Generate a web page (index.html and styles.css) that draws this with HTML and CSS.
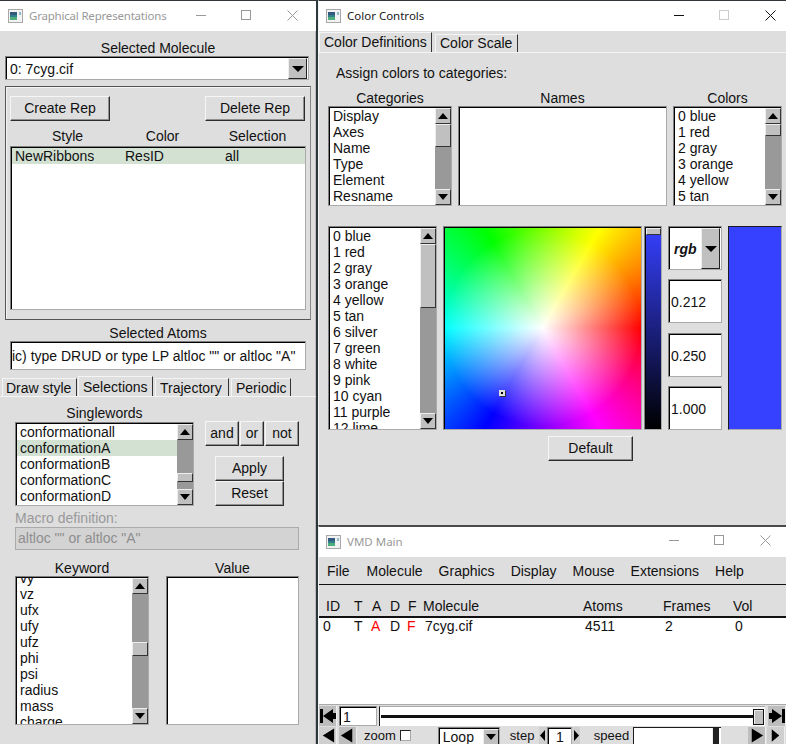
FILE: index.html
```html
<!DOCTYPE html>
<html lang="en">
<head>
  <meta charset="UTF-8">
  <title>VMD</title>
  <link rel="stylesheet" href="styles.css">
</head>
<body>
  <svg class="defs" width="0" height="0">
    <symbol id="appicon" viewBox="0 0 15 14">
      <rect x="0.5" y="0.5" width="14" height="13" fill="#f2f2f2" stroke="#a8a8a8"/>
      <rect x="2" y="3" width="7" height="8" fill="#2f7f8c"/>
      <rect x="2" y="3" width="7" height="3" fill="#33597f"/>
      <rect x="2" y="8" width="7" height="3" fill="#4fae7c"/>
      <rect x="11" y="3" width="2" height="3" fill="#8fb8c8"/>
    </symbol>
  </svg>

  <div class="desktop">
    <!-- Graphical Representations -->
    <div class="window reps">
      <div class="titlebar inactive">
        <svg class="appicon"><use href="#appicon"/></svg>
        <span class="wintitle">Graphical Representations</span>
        <span class="wc wc-min"></span>
        <span class="wc wc-max"></span>
        <svg class="wc-close" viewBox="0 0 11 11"><path d="M0.5 0.5L10.5 10.5M10.5 0.5L0.5 10.5"/></svg>
      </div>
      <div class="reps-body">
        <div class="caption mol-caption">Selected Molecule</div>
        <div class="choice mol-choice">
          <span class="choice-text">0: 7cyg.cif</span>
          <span class="choice-btn"></span>
        </div>
        <div class="repbox">
          <div class="rep-buttons">
            <button class="btn btn-rep">Create Rep</button>
            <button class="btn btn-rep">Delete Rep</button>
          </div>
          <div class="rep-head">
            <span>Style</span><span>Color</span><span>Selection</span>
          </div>
          <div class="list rep-list">
            <div class="rep-row"><span>NewRibbons</span><span>ResID</span><span>all</span></div>
          </div>
        </div>
        <div class="caption atoms-caption">Selected Atoms</div>
        <div class="field atoms-field">ic) type DRUD or type LP altloc "" or altloc "A"</div>
        <div class="tabs reps-tabs">
          <span class="tab tab-draw">Draw style</span>
          <span class="tab tab-on tab-sel">Selections</span>
          <span class="tab tab-traj">Trajectory</span>
          <span class="tab tab-per">Periodic</span>
        </div>
        <div class="sel-panel">
          <div class="sel-top">
            <div>
              <div class="caption words-caption">Singlewords</div>
              <div class="list words-list">
                <div class="items">
                  <div>conformationall</div>
                  <div class="picked">conformationA</div>
                  <div>conformationB</div>
                  <div>conformationC</div>
                  <div>conformationD</div>
                </div>
                <div class="scrollbar">
                  <span class="arrow up"></span>
                  <div class="trough"><span class="thumb thumb-words"></span></div>
                  <span class="arrow down"></span>
                </div>
              </div>
            </div>
            <div class="sel-actions">
              <div class="logic">
                <button class="btn btn-and">and</button>
                <button class="btn btn-or">or</button>
                <button class="btn btn-and">not</button>
              </div>
              <div class="apply">
                <button class="btn btn-apply">Apply</button>
                <button class="btn btn-apply">Reset</button>
              </div>
            </div>
          </div>
          <div class="macro-label">Macro definition:</div>
          <div class="macro-field">altloc "" or altloc "A"</div>
          <div class="sel-bottom">
            <div>
              <div class="caption">Keyword</div>
              <div class="list key-list">
                <div class="items items-up">
                  <div>vy</div>
                  <div>vz</div>
                  <div>ufx</div>
                  <div>ufy</div>
                  <div>ufz</div>
                  <div>phi</div>
                  <div>psi</div>
                  <div>radius</div>
                  <div>mass</div>
                  <div>charge</div>
                </div>
                <div class="scrollbar">
                  <span class="arrow up"></span>
                  <div class="trough"><span class="thumb thumb-keys"></span></div>
                  <span class="arrow down"></span>
                </div>
              </div>
            </div>
            <div>
              <div class="caption">Value</div>
              <div class="list value-list"></div>
            </div>
          </div>
        </div>
      </div>
    </div>

    <div class="right-col">
      <!-- Color Controls -->
      <div class="window colors">
        <div class="titlebar">
          <svg class="appicon"><use href="#appicon"/></svg>
          <span class="wintitle">Color Controls</span>
          <span class="wc wc-min"></span>
          <span class="wc wc-max wc-off"></span>
          <svg class="wc-close" viewBox="0 0 11 11"><path d="M0.5 0.5L10.5 10.5M10.5 0.5L0.5 10.5"/></svg>
        </div>
        <div class="tabs color-tabs">
          <span class="tab tab-on tab-defs">Color Definitions</span>
          <span class="tab tab-scale">Color Scale</span>
        </div>
        <div class="color-panel">
          <div class="assign">Assign colors to categories:</div>
          <div class="color-lists">
            <div>
              <div class="caption">Categories</div>
              <div class="list cat-list">
                <div class="items">
                  <div>Display</div>
                  <div>Axes</div>
                  <div>Name</div>
                  <div>Type</div>
                  <div>Element</div>
                  <div>Resname</div>
                </div>
                <div class="scrollbar">
                  <span class="arrow up"></span>
                  <div class="trough"><span class="thumb thumb-cats"></span></div>
                  <span class="arrow down"></span>
                </div>
              </div>
            </div>
            <div>
              <div class="caption">Names</div>
              <div class="list names-list"></div>
            </div>
            <div>
              <div class="caption">Colors</div>
              <div class="list colors-list">
                <div class="items">
                  <div>0 blue</div>
                  <div>1 red</div>
                  <div>2 gray</div>
                  <div>3 orange</div>
                  <div>4 yellow</div>
                  <div>5 tan</div>
                </div>
                <div class="scrollbar">
                  <span class="arrow up"></span>
                  <div class="trough"><span class="thumb thumb-colors"></span></div>
                  <span class="arrow down"></span>
                </div>
              </div>
            </div>
          </div>
          <div class="editor">
            <div class="list editor-list">
              <div class="items">
                <div>0 blue</div>
                <div>1 red</div>
                <div>2 gray</div>
                <div>3 orange</div>
                <div>4 yellow</div>
                <div>5 tan</div>
                <div>6 silver</div>
                <div>7 green</div>
                <div>8 white</div>
                <div>9 pink</div>
                <div>10 cyan</div>
                <div>11 purple</div>
                <div>12 lime</div>
              </div>
              <div class="scrollbar">
                <span class="arrow up"></span>
                <div class="trough"><span class="thumb thumb-edit"></span></div>
                <span class="arrow down"></span>
              </div>
            </div>
            <div class="picker"><span class="picker-dot"></span></div>
            <div class="value-slider"><span class="value-thumb"></span></div>
            <div class="rgb-col">
              <div class="choice rgb-choice">
                <span class="choice-text rgb-text">rgb</span>
                <span class="choice-btn rgb-btn"></span>
              </div>
              <div class="field rgb-val">0.212</div>
              <div class="field rgb-val rgb-mid">0.250</div>
              <div class="field rgb-val">1.000</div>
            </div>
            <div class="swatch"></div>
          </div>
          <button class="btn btn-default">Default</button>
        </div>
      </div>

      <!-- VMD Main -->
      <div class="window main">
        <div class="titlebar inactive">
          <svg class="appicon"><use href="#appicon"/></svg>
          <span class="wintitle">VMD Main</span>
          <span class="wc wc-min"></span>
          <span class="wc wc-max"></span>
          <svg class="wc-close" viewBox="0 0 11 11"><path d="M0.5 0.5L10.5 10.5M10.5 0.5L0.5 10.5"/></svg>
        </div>
        <div class="menubar">
          <span>File</span><span>Molecule</span><span>Graphics</span><span>Display</span><span>Mouse</span><span>Extensions</span><span>Help</span>
        </div>
        <div class="mol-head">
          <span>ID</span><span>T</span><span>A</span><span>D</span><span>F</span><span>Molecule</span><span>Atoms</span><span>Frames</span><span>Vol</span>
        </div>
        <div class="mol-list">
          <div class="mol-row">
            <span>0</span><span>T</span><span class="off">A</span><span>D</span><span class="off">F</span><span>7cyg.cif</span><span>4511</span><span>2</span><span>0</span>
          </div>
        </div>
        <div class="anim-row">
          <span class="anim-btn">
            <svg viewBox="0 0 18 18"><path d="M1 2h3v14H1zM4 9l10-7v4h3v6h-3v4z"/></svg>
          </span>
          <div class="field frame-field">1</div>
          <div class="frame-slider"><span class="frame-line"></span><span class="frame-thumb"></span></div>
          <span class="anim-btn anim-end">
            <svg viewBox="0 0 18 18"><path d="M17 2h-3v14h3zM14 9L4 2v4H1v6h3v4z"/></svg>
          </span>
        </div>
        <div class="play-row">
          <span class="play-btn"><svg viewBox="0 0 18 17"><path d="M16 1v15L4 8.500z"/></svg></span>
          <span class="play-btn play-solid"><svg viewBox="0 0 18 17"><path d="M14 1v15L2 8.500z"/></svg></span>
          <span class="zoom-label">zoom</span>
          <span class="checkbox"></span>
          <div class="choice loop-choice">
            <span class="choice-text">Loop</span>
            <span class="choice-btn loop-btn"></span>
          </div>
          <span class="step-label">step</span>
          <span class="nudge"><svg viewBox="0 0 8 17"><path d="M6 3v11L1 8.500z"/></svg></span>
          <div class="field step-field">1</div>
          <span class="nudge"><svg viewBox="0 0 8 17"><path d="M2 3v11l5-5.500z"/></svg></span>
          <span class="speed-label">speed</span>
          <div class="speed-slider"><span class="speed-thumb"></span></div>
          <span class="play-btn play-solid play-fwd"><svg viewBox="0 0 18 17"><path d="M4 1v15l12-7.500z"/></svg></span>
          <span class="play-btn play-last"><svg viewBox="0 0 18 17"><path d="M5 2v13l8-6.500z"/></svg></span>
        </div>
      </div>
    </div>
  </div>
</body>
</html>
```

FILE: styles.css
```css
* {
  box-sizing: border-box;
}

html, body {
  margin: 0;
  padding: 0;
  height: 744px;
  overflow: hidden;
}

body {
  font-family: "Liberation Sans", Arial, sans-serif;
  font-size: 14px;
  line-height: 16px;
  color: #111;
  background: #dedede;
}

.defs {
  position: absolute;
}

.desktop {
  display: flex;
  width: 786px;
  height: 744px;
}

.right-col {
  width: 468px;
  display: flex;
  flex-direction: column;
}

.window {
  background: #dedede;
  border-top: 1px solid #30363a;
  overflow: hidden;
}

/* title bars */
.titlebar {
  display: flex;
  align-items: center;
  height: 30px;
  background: #fff;
  padding-left: 7px;
  position: relative;
}

.reps .titlebar {
  padding-left: 8px;
}

.appicon {
  width: 15px;
  height: 14px;
  margin-right: 6px;
}

.wintitle {
  font-family: "Noto Sans", sans-serif;
  font-size: 11.500px;
  color: #1a1a1a;
}

.reps .wintitle {
  letter-spacing: -0.2px;
}

.inactive .wintitle {
  color: #999;
}

.wc {
  position: absolute;
}

.wc-min {
  width: 10px;
  height: 1px;
  top: 14px;
  background: #111;
}

.wc-max {
  width: 10px;
  height: 10px;
  top: 9px;
  border: 1px solid #111;
}

.wc-off {
  border-color: #ccc;
}

.wc-close {
  position: absolute;
  width: 11px;
  height: 11px;
  top: 9px;
  fill: none;
  stroke: #111;
}

.inactive .wc-min {
  background: #999;
}

.inactive .wc-max {
  border-color: #999;
}

.inactive .wc-close {
  stroke: #999;
}

.reps .wc-min { left: 196px; }
.reps .wc-max { left: 241px; }
.reps .wc-close { left: 287px; }
.colors .wc-min { left: 355px; }
.colors .wc-max { left: 400px; }
.colors .wc-close { left: 446px; }
.main .wc-min { left: 350px; top: 13px; }
.main .wc-max { left: 395px; top: 8px; }
.main .wc-close { left: 441px; top: 8px; }

/* shared widgets */
.caption {
  text-align: center;
}

.btn {
  display: block;
  font: inherit;
  color: inherit;
  background: #dedede;
  padding: 0 0 2px;
  border: 1px solid;
  border-color: #f6f6f6 #2c2c2c #2c2c2c #f6f6f6;
  box-shadow: inset -1px -1px 0 #909090;
}

/* sunken edge: gray then black on top and left, light on bottom and right */
.list,
.field,
.choice,
.picker,
.value-slider {
  background: #fff;
  border: 1px solid;
  border-color: #808080 #aaa #aaa #808080;
  padding: 1px 0 0 1px;
  box-shadow: inset 1px 1px 0 #000;
}

.list {
  display: flex;
  overflow: hidden;
}

.items {
  flex: 1;
  min-width: 0;
}

.items div {
  height: 16px;
  padding-left: 3px;
  white-space: nowrap;
}

.items .picked {
  background: #d3e1d3;
}

.scrollbar {
  width: 16px;
  flex: none;
  display: flex;
  flex-direction: column;
  background: #999;
}

.arrow {
  display: flex;
  align-items: center;
  justify-content: center;
  flex: none;
  height: 16px;
  background: #c0c0c0;
  border: 1px solid;
  border-color: #eee #333 #333 #eee;
}

.arrow::after {
  content: "";
  border-left: 5px solid transparent;
  border-right: 5px solid transparent;
}

.arrow.up::after {
  border-bottom: 6px solid #000;
}

.arrow.down::after {
  border-top: 6px solid #000;
}

.trough {
  flex: 1;
  min-height: 0;
  overflow: hidden;
}

.thumb {
  display: block;
  background: #c0c0c0;
  border: 1px solid;
  border-color: #eee #333 #333 #eee;
}

.choice {
  display: flex;
  align-items: center;
  justify-content: space-between;
}

.choice-text {
  padding-left: 3px;
}

.choice-btn {
  display: flex;
  align-items: center;
  justify-content: center;
  width: 19px;
  height: 100%;
  background: #c0c0c0;
  border: 1px solid;
  border-color: #eee #222 #222 #eee;
}

.choice-btn::after {
  content: "";
  border-left: 6px solid transparent;
  border-right: 6px solid transparent;
  border-top: 6px solid #000;
}

.field {
  display: flex;
  align-items: center;
  white-space: nowrap;
  overflow: hidden;
}

.tabs {
  display: flex;
  align-items: flex-end;
}

.tab {
  height: 18px;
  line-height: 17px;
  padding-left: 4px;
  border-right: 1px solid #333;
  border-left: 1px solid #f4f4f4;
  border-top: 1px solid #f4f4f4;
}

.tab-on {
  height: 20px;
  line-height: 18px;
}

/* Graphical Representations window */
.reps {
  width: 318px;
  height: 744px;
  flex: none;
  border-right: 2px solid #2d363b;
  box-shadow: inset -1px 0 0 #bbb;
}

.reps-body {
  padding-top: 9px;
}

.mol-caption {
  width: 316px;
}

.mol-choice {
  width: 304px;
  height: 24px;
  margin-left: 5px;
  padding-right: 1px;
}

.repbox {
  width: 306px;
  height: 234px;
  margin: 6px 0 0 5px;
  padding: 9px 4px 0;
  border: 1px solid;
  border-color: #555 #888 #555 #555;
  box-shadow: inset 1px 1px 0 #f4f4f4;
}

.rep-buttons {
  display: flex;
  justify-content: space-between;
  padding-right: 1px;
}

.btn-rep {
  width: 100px;
  height: 25px;
}

.rep-head {
  display: grid;
  grid-template-columns: 95px 95px 95px;
  text-align: center;
  margin-top: 7px;
  height: 16px;
  padding-left: 10px;
}

.rep-list {
  display: block;
  width: 296px;
  height: 164px;
  margin-top: 2px;
}

.rep-row {
  display: grid;
  grid-template-columns: 110px 100px 1fr;
  height: 16px;
  padding-left: 3px;
  background: #d3e1d3;
}

.atoms-caption {
  width: 316px;
  margin-top: 5px;
}

.atoms-field {
  width: 296px;
  height: 29px;
  margin-left: 10px;
}

.reps-tabs {
  height: 20px;
  margin-top: 6px;
  padding-left: 2px;
}

.reps-tabs .tab {
  line-height: 19px;
}

.reps-tabs .tab-on {
  line-height: 20px;
}

.reps-tabs .tab-draw {
  padding-left: 3px;
}

.tab-draw { width: 75px; }
.tab-sel { width: 75px; margin-left: 1px; }
.tab-traj { width: 74px; margin-left: 2px; }
.tab-per { width: 60px; margin-left: 2px; }

.sel-panel {
  border-top: 1px solid #f4f4f4;
  padding: 9px 0 0 15px;
}

.sel-top {
  display: flex;
}

.words-caption {
  margin: -1px 0 1px;
}

.words-list {
  width: 179px;
  height: 84px;
}

.thumb-words {
  height: 9px;
  margin-top: 33px;
}

.sel-actions {
  margin: 15px 0 0 11px;
}

.logic {
  display: flex;
  gap: 1px;
}

.btn-and {
  width: 34px;
  height: 25px;
}

.btn-or {
  width: 24px;
  height: 25px;
}

.apply {
  margin: 10px 0 0 10px;
}

.btn-apply {
  width: 69px;
  height: 25px;
}

.macro-label {
  color: #999;
  margin-top: 4px;
}

.macro-field {
  width: 284px;
  height: 23px;
  line-height: 21px;
  margin-top: 1px;
  padding-left: 2px;
  color: #8e8e8e;
  background: #d3d3d3;
  border: 1px solid #aaa;
}

.sel-bottom {
  display: flex;
  gap: 17px;
  margin-top: 10px;
}

.key-list {
  width: 134px;
  height: 149px;
}

.items-up {
  margin-top: -8px;
  height: 160px;
}

.thumb-keys {
  height: 14px;
  margin-top: 48px;
}

.value-list {
  width: 133px;
  height: 149px;
}

/* Color Controls window */
.colors {
  height: 525px;
  flex: none;
  border-left: 1px solid #f4f4f4;
}

.color-tabs {
  height: 21px;
}

.tab-defs { width: 113px; }
.tab-scale { width: 83px; margin-left: 3px; }

.color-panel {
  border-top: 1px solid #f4f4f4;
  height: 474px;
  padding: 12px 0 0 9px;
}

.assign {
  padding-left: 8px;
  margin-bottom: 9px;
}

.color-lists {
  display: flex;
  gap: 6px;
}

.cat-list {
  width: 124px;
  height: 100px;
}

.names-list {
  width: 209px;
  height: 100px;
}

.colors-list {
  width: 109px;
  height: 100px;
}

.thumb-cats {
  height: 23px;
}

.thumb-colors {
  height: 12px;
}

.editor {
  display: flex;
  margin-top: 20px;
  height: 204px;
}

.editor-list {
  width: 109px;
  height: 204px;
}

.thumb-edit {
  height: 64px;
}

.picker {
  position: relative;
  width: 199px;
  height: 204px;
  margin-left: 6px;
  background:
    radial-gradient(circle closest-side, #fff, rgba(255, 255, 255, 0)),
    conic-gradient(from 90deg, #f00, #f0f, #00f, #0ff, #0f0, #ff0, #f00);
}

.picker-dot {
  position: absolute;
  left: 55px;
  top: 163px;
  width: 6px;
  height: 6px;
  background: #000;
  border: 2px solid #ddd;
  box-shadow: 1px 1px 0 #333;
}

.value-slider {
  width: 18px;
  height: 204px;
  margin-left: 2px;
  background: linear-gradient(#3640ff, #000);
}

.value-thumb {
  display: block;
  height: 7px;
  background: #c0c0c0;
  border: 1px solid;
  border-color: #eee #333 #333 #eee;
}

.rgb-col {
  display: flex;
  flex-direction: column;
  width: 54px;
  margin-left: 6px;
}

.rgb-choice {
  height: 44px;
  padding-right: 1px;
}

.rgb-text {
  font-weight: bold;
  font-style: italic;
  padding-left: 4px;
}

.rgb-val {
  height: 44px;
  margin-top: 9px;
  padding-left: 2px;
}

.rgb-mid {
  margin-top: 10px;
}

.swatch {
  width: 54px;
  height: 204px;
  margin-left: 6px;
  background: #3640ff;
  border: 1px solid;
  border-color: #1c1c1c #aaa #aaa #1c1c1c;
}

.btn-default {
  width: 85px;
  height: 25px;
  margin: 6px 0 0 220px;
}

/* VMD Main window */
.main {
  flex: 1;
  min-height: 0;
  border-top: 2px solid #4a4a4a;
  border-left: 1px solid #f4f4f4;
}

.menubar {
  display: flex;
  gap: 16px;
  height: 28px;
  padding: 6px 0 0 8px;
  border-bottom: 1px solid #111;
}

.menubar span:first-child {
  margin-right: 1px;
}

.mol-head,
.mol-row {
  display: grid;
  height: 16px;
}

.mol-head {
  grid-template-columns: 28px 18px 18px 18px 15px 160px 80px 70px 40px;
  margin-top: 13px;
  padding-left: 7px;
}

.mol-list {
  height: 89px;
  margin-top: 2px;
  padding-left: 4px;
  background: #fff;
  border-top: 2px solid #111;
  border-bottom: 1px solid #aaa;
}

.mol-row {
  grid-template-columns: 31px 17px 19px 17px 18px 160px 80px 70px 40px;
}

.off {
  color: #f00;
}

.anim-row {
  display: flex;
  height: 20px;
  margin-top: 1px;
}

.anim-btn {
  width: 18px;
  height: 20px;
  padding: 1px 0;
  background: #bdbdbd;
  border-right: 1px solid #eee;
  flex: none;
}

.anim-btn svg {
  display: block;
  width: 18px;
  height: 18px;
}

.anim-end {
  margin-left: 3px;
}

.frame-field {
  width: 38px;
  height: 20px;
  margin-left: 2px;
  padding-left: 3px;
}

.frame-slider {
  display: flex;
  align-items: center;
  width: 387px;
  height: 20px;
  margin-left: 2px;
  padding: 0 1px 0 1px;
  background: #fff;
  border-left: 1px solid #1c1c1c;
  border-top: 1px solid #aaa;
}

.frame-line {
  flex: 1;
  height: 3px;
  background: #111;
}

.frame-thumb {
  width: 11px;
  height: 16px;
  background: #c0c0c0;
  border: 1px solid #111;
  box-shadow: inset 1px 1px 0 #eee;
}

.play-row {
  display: flex;
  align-items: center;
  height: 17px;
  margin-top: 1px;
}

.play-btn {
  width: 18px;
  height: 17px;
  flex: none;
  background: #cfcfcf;
  border-right: 1px solid #eee;
}

.play-solid {
  margin-left: 2px;
  background: #bdbdbd;
}

.play-fwd {
  margin-left: 27px;
}

.play-last {
  margin-left: 1px;
}

.play-btn svg,
.nudge svg {
  display: block;
  width: 100%;
  height: 100%;
}

.zoom-label {
  margin-left: 7px;
  font-size: 13px;
}

.checkbox {
  width: 11px;
  height: 11px;
  margin-left: 4px;
  background: #fff;
  border: 1px solid;
  border-color: #222 #aaa #aaa #222;
}

.loop-choice {
  width: 62px;
  height: 17px;
  margin-left: 27px;
  border-bottom: 0;
}

.loop-btn {
  width: 16px;
  height: 16px;
}

.loop-btn::after {
  border-left-width: 5px;
  border-right-width: 5px;
}

.step-label {
  margin-left: 10px;
  width: 29px;
  font-size: 13px;
}

.nudge {
  width: 8px;
  height: 17px;
  flex: none;
  background: #cfcfcf;
}

.step-field {
  justify-content: center;
  width: 25px;
  height: 17px;
  border-bottom: 0;
}

.speed-label {
  margin-left: 14px;
  width: 39px;
  font-size: 13px;
}

.speed-slider {
  display: flex;
  justify-content: flex-end;
  width: 88px;
  height: 17px;
  background: #fff;
  padding-right: 2px;
  border-left: 1px solid #1c1c1c;
  border-top: 1px solid #1c1c1c;
}

.speed-thumb {
  width: 7px;
  height: 16px;
  background: #222;
  border-left: 1px solid #eee;
}
```
